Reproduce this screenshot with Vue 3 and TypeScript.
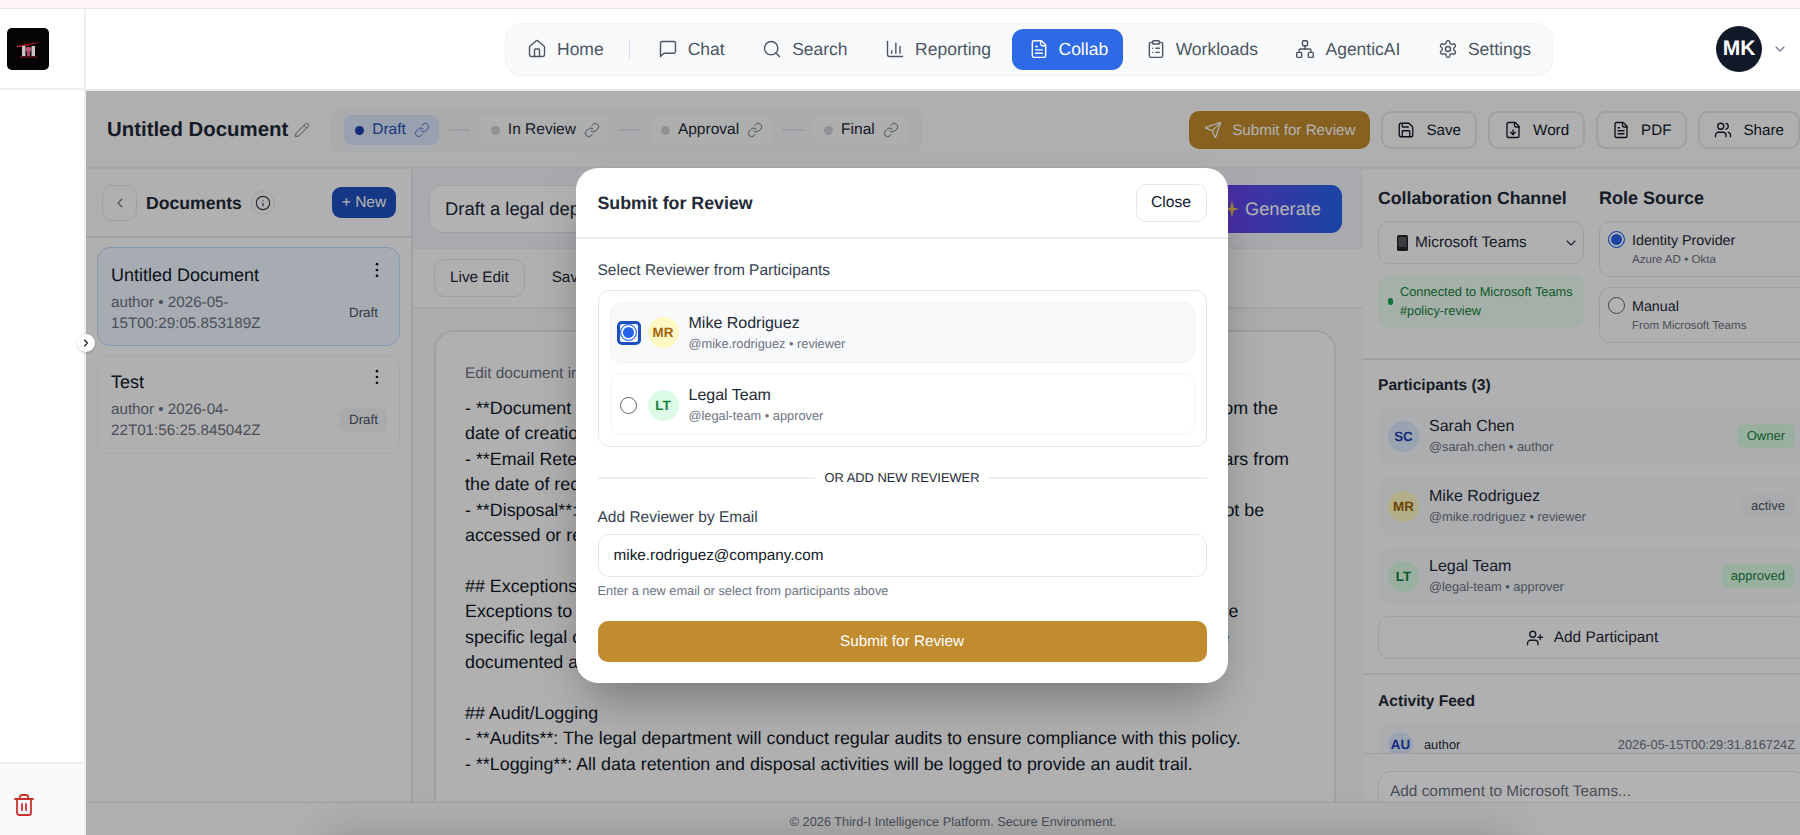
<script setup lang="ts">
import { h } from 'vue';

// lucide-style outlines, keyed by name
const icons: Record<string, string[]> = {
  home: ['M15 21v-8a1 1 0 0 0-1-1h-4a1 1 0 0 0-1 1v8', 'M3 10a2 2 0 0 1 .709-1.528l7-5.999a2 2 0 0 1 2.582 0l7 5.999A2 2 0 0 1 21 10v9a2 2 0 0 1-2 2H5a2 2 0 0 1-2-2z'],
  chat: ['M21 15a2 2 0 0 1-2 2H7l-4 4V5a2 2 0 0 1 2-2h14a2 2 0 0 1 2 2z'],
  search: ['M19 11a8 8 0 1 1-16 0 8 8 0 0 1 16 0', 'm21 21-4.3-4.3'],
  chart: ['M3 3v16a2 2 0 0 0 2 2h16', 'M18 17V9', 'M13 17V5', 'M8 17v-3'],
  file: ['M15 2H6a2 2 0 0 0-2 2v16a2 2 0 0 0 2 2h12a2 2 0 0 0 2-2V7Z', 'M14 2v4a2 2 0 0 0 2 2h4', 'M10 9H8', 'M16 13H8', 'M16 17H8'],
  clipboard: ['M9 2h6a1 1 0 0 1 1 1v2a1 1 0 0 1-1 1H9a1 1 0 0 1-1-1V3a1 1 0 0 1 1-1z', 'M16 4h2a2 2 0 0 1 2 2v14a2 2 0 0 1-2 2H6a2 2 0 0 1-2-2V6a2 2 0 0 1 2-2h2', 'M12 11h4', 'M12 16h4', 'M8 11h.01', 'M8 16h.01'],
  network: ['M17 16h4a1 1 0 0 1 1 1v4a1 1 0 0 1-1 1h-4a1 1 0 0 1-1-1v-4a1 1 0 0 1 1-1z', 'M3 16h4a1 1 0 0 1 1 1v4a1 1 0 0 1-1 1H3a1 1 0 0 1-1-1v-4a1 1 0 0 1 1-1z', 'M10 2h4a1 1 0 0 1 1 1v4a1 1 0 0 1-1 1h-4a1 1 0 0 1-1-1V3a1 1 0 0 1 1-1z', 'M5 16v-3a1 1 0 0 1 1-1h12a1 1 0 0 1 1 1v3', 'M12 12V8'],
  gear: ['M12.22 2h-.44a2 2 0 0 0-2 2v.18a2 2 0 0 1-1 1.73l-.43.25a2 2 0 0 1-2 0l-.15-.08a2 2 0 0 0-2.73.73l-.22.38a2 2 0 0 0 .73 2.73l.15.1a2 2 0 0 1 1 1.72v.51a2 2 0 0 1-1 1.74l-.15.09a2 2 0 0 0-.73 2.73l.22.38a2 2 0 0 0 2.73.73l.15-.08a2 2 0 0 1 2 0l.43.25a2 2 0 0 1 1 1.73V20a2 2 0 0 0 2 2h.44a2 2 0 0 0 2-2v-.18a2 2 0 0 1 1-1.73l.43-.25a2 2 0 0 1 2 0l.15.08a2 2 0 0 0 2.73-.73l.22-.39a2 2 0 0 0-.73-2.73l-.15-.08a2 2 0 0 1-1-1.74v-.5a2 2 0 0 1 1-1.74l.15-.09a2 2 0 0 0 .73-2.73l-.22-.38a2 2 0 0 0-2.73-.73l-.15.08a2 2 0 0 1-2 0l-.43-.25a2 2 0 0 1-1-1.73V4a2 2 0 0 0-2-2z', 'M15 12a3 3 0 1 1-6 0 3 3 0 0 1 6 0'],
  pencil: ['M21.174 6.812a1 1 0 0 0-3.986-3.987L3.842 16.174a2 2 0 0 0-.5.83l-1.321 4.352a.5.5 0 0 0 .623.622l4.353-1.32a2 2 0 0 0 .83-.497z', 'm15 5 4 4'],
  link: ['M10 13a5 5 0 0 0 7.54.54l3-3a5 5 0 0 0-7.07-7.07l-1.72 1.71', 'M14 11a5 5 0 0 0-7.54-.54l-3 3a5 5 0 0 0 7.07 7.07l1.71-1.71'],
  send: ['M14.536 21.686a.5.5 0 0 0 .937-.024l6.5-19a.496.496 0 0 0-.635-.635l-19 6.5a.5.5 0 0 0-.024.937l7.93 3.18a2 2 0 0 1 1.112 1.11z', 'm21.854 2.147-10.94 10.939'],
  save: ['M15.2 3a2 2 0 0 1 1.4.6l3.8 3.8a2 2 0 0 1 .6 1.4V19a2 2 0 0 1-2 2H5a2 2 0 0 1-2-2V5a2 2 0 0 1 2-2z', 'M17 21v-7a1 1 0 0 0-1-1H8a1 1 0 0 0-1 1v7', 'M7 3v4a1 1 0 0 0 1 1h7'],
  fileDown: ['M15 2H6a2 2 0 0 0-2 2v16a2 2 0 0 0 2 2h12a2 2 0 0 0 2-2V7Z', 'M14 2v4a2 2 0 0 0 2 2h4', 'M12 18v-6', 'm9 15 3 3 3-3'],
  users: ['M16 21v-2a4 4 0 0 0-4-4H6a4 4 0 0 0-4 4v2', 'M13 7a4 4 0 1 1-8 0 4 4 0 0 1 8 0', 'M22 21v-2a4 4 0 0 0-3-3.87', 'M16 3.13a4 4 0 0 1 0 7.75'],
  userPlus: ['M16 21v-2a4 4 0 0 0-4-4H6a4 4 0 0 0-4 4v2', 'M13 7a4 4 0 1 1-8 0 4 4 0 0 1 8 0', 'M19 8v6', 'M22 11h-6'],
  trash: ['M3 6h18', 'M19 6v14c0 1-1 2-2 2H7c-1 0-2-1-2-2V6', 'M8 6V4c0-1 1-2 2-2h4c1 0 2 1 2 2v2', 'M10 11v6', 'M14 11v6'],
  info: ['M22 12a10 10 0 1 1-20 0 10 10 0 0 1 20 0', 'M12 16v-4', 'M12 8h.01'],
  left: ['m15 18-6-6 6-6'],
  right: ['m9 18 6-6-6-6'],
  down: ['m6 9 6 6 6-6'],
  kebab: ['M12 5h.01', 'M12 12h.01', 'M12 19h.01'],
};

const Icon = (props: { name: string; size?: number; sw?: number }) =>
  h(
    'svg',
    {
      width: props.size ?? 20,
      height: props.size ?? 20,
      viewBox: '0 0 24 24',
      fill: 'none',
      stroke: 'currentColor',
      'stroke-width': props.sw ?? 2,
      'stroke-linecap': 'round',
      'stroke-linejoin': 'round',
      style: 'flex:none;display:block',
    },
    (icons[props.name] ?? []).map((d) => h('path', { d })),
  );
Icon.props = ['name', 'size', 'sw'];

const navItems = [
  { label: 'Home', icon: 'home', sep: true },
  { label: 'Chat', icon: 'chat' },
  { label: 'Search', icon: 'search' },
  { label: 'Reporting', icon: 'chart' },
  { label: 'Collab', icon: 'file', active: true },
  { label: 'Workloads', icon: 'clipboard' },
  { label: 'AgenticAI', icon: 'network' },
  { label: 'Settings', icon: 'gear' },
];

const stages = [
  { label: 'Draft', active: true },
  { label: 'In Review' },
  { label: 'Approval' },
  { label: 'Final' },
];

const actions = [
  { label: 'Save', icon: 'save' },
  { label: 'Word', icon: 'fileDown' },
  { label: 'PDF', icon: 'file' },
  { label: 'Share', icon: 'users' },
];

const documents = [
  { title: 'Untitled Document', meta: 'author • 2026-05-15T00:29:05.853189Z', selected: true },
  { title: 'Test', meta: 'author • 2026-04-22T01:56:25.845042Z' },
];

const docLines = [
  '- **Document Retention**: All documents must be retained for a strict minimum of seven years from the',
  'date of creation or last modification, whichever occurs later in the retention cycle.',
  '- **Email Retention**: All of our correspondence should be securely retained for at least three years from',
  'the date of receipt or sending, unless a longer period applies under this policy.',
  '- **Disposal**: Documents and emails past their fixed retention date must be deleted and must not be',
  'accessed or restored after disposal has been completed by the responsible team.',
  '',
  '## Exceptions',
  'Exceptions to this policy must be approved by the legal department in writing only where there are',
  'specific legal or regulatory requirements for longer data retention. All allowed exceptions must be',
  'documented and reviewed on an annual basis by the department.',
  '',
  '## Audit/Logging',
  '- **Audits**: The legal department will conduct regular audits to ensure compliance with this policy.',
  '- **Logging**: All data retention and disposal activities will be logged to provide an audit trail.',
];

const participants = [
  { initials: 'SC', tone: 'blue', name: 'Sarah Chen', sub: '@sarah.chen • author', badge: 'Owner', badgeTone: 'green' },
  { initials: 'MR', tone: 'yellow', name: 'Mike Rodriguez', sub: '@mike.rodriguez • reviewer', badge: 'active', badgeTone: 'gray' },
  { initials: 'LT', tone: 'green', name: 'Legal Team', sub: '@legal-team • approver', badge: 'approved', badgeTone: 'green' },
];

const reviewers = [
  { initials: 'MR', tone: 'yellow', name: 'Mike Rodriguez', sub: '@mike.rodriguez • reviewer', checked: true },
  { initials: 'LT', tone: 'green', name: 'Legal Team', sub: '@legal-team • approver', checked: false },
];
</script>

<template>
  <div class="app">
    <div class="strip"></div>
    <div class="shell">
      <aside class="rail">
        <div class="rail-top">
          <svg class="logo" width="42" height="42" viewBox="0 0 42 42">
            <rect width="42" height="42" rx="5" fill="#060405" />
            <path d="M9 18 L35 13.5 L17 18.5 L10 19 Z" fill="#c0262d" />
            <rect x="15" y="18" width="3.5" height="10" fill="#c9c5c6" />
            <rect x="24.5" y="18" width="3.5" height="10" fill="#c9c5c6" />
            <circle cx="21.5" cy="21.5" r="2.8" fill="#c0587a" />
            <rect x="20" y="22" width="3" height="6" fill="#b04a6a" />
            <rect x="13" y="28.5" width="17" height="1" fill="#8a2028" />
          </svg>
        </div>
        <div class="rail-fill"></div>
        <div class="rail-foot">
          <Icon class="trash" name="trash" :size="24" :sw="1.8" />
        </div>
      </aside>

      <div class="workspace">
        <header class="topbar">
          <nav class="nav">
            <template v-for="item in navItems" :key="item.label">
              <a class="nav-item" :class="{ active: item.active }">
                <Icon :name="item.icon" :size="20" :sw="1.7" />
                <span>{{ item.label }}</span>
              </a>
              <span v-if="item.sep" class="nav-sep"></span>
            </template>
          </nav>
          <div class="avatar-main">MK</div>
          <Icon class="avatar-caret" name="down" :size="16" :sw="1.6" />
        </header>

        <div class="content">
          <div class="doc-bar">
            <h1 class="doc-title">Untitled Document</h1>
            <Icon class="doc-pencil" name="pencil" :size="16" :sw="1.5" />
            <div class="stages">
              <template v-for="(s, i) in stages" :key="s.label">
                <span v-if="i > 0" class="stage-dash"></span>
                <div class="stage" :class="{ active: s.active }">
                  <span class="stage-dot"></span>
                  <span>{{ s.label }}</span>
                  <Icon class="stage-link" name="link" :size="16" :sw="1.5" />
                </div>
              </template>
            </div>
            <div class="actions">
              <button class="btn btn-gold">
                <Icon name="send" :size="18" :sw="1.6" />
                Submit for Review
              </button>
              <button v-for="a in actions" :key="a.label" class="btn">
                <Icon :name="a.icon" :size="18" :sw="1.8" />
                {{ a.label }}
              </button>
            </div>
          </div>

          <div class="panes">
            <section class="docs">
              <div class="docs-head">
                <button class="back"><Icon name="left" :size="16" :sw="1.6" /></button>
                <span class="docs-title">Documents</span>
                <span class="docs-info"><Icon name="info" :size="16" :sw="1.8" /></span>
                <button class="new">+ New</button>
              </div>
              <div class="docs-list">
                <article v-for="d in documents" :key="d.title" class="doc-card" :class="{ selected: d.selected }">
                  <div class="doc-card-top">
                    <span>{{ d.title }}</span>
                    <Icon class="kebab" name="kebab" :size="20" :sw="3.2" />
                  </div>
                  <div class="doc-card-bottom">
                    <span class="doc-meta">{{ d.meta }}</span>
                    <span class="doc-badge">Draft</span>
                  </div>
                </article>
              </div>
            </section>

            <section class="editor">
              <div class="prompt-row">
                <div class="prompt">Draft a legal department data retention policy</div>
                <button class="generate">
                  <svg width="14" height="18" viewBox="0 0 14 18"><path d="M7 0 L8.6 7.4 L14 9 L8.6 10.6 L7 18 L5.4 10.6 L0 9 L5.4 7.4 Z" fill="#e9bd54" /></svg>
                  Generate
                </button>
              </div>
              <div class="mode-row">
                <button class="mode">Live Edit</button>
                <button class="mode ghost">Save Version</button>
              </div>
              <div class="editor-body">
                <div class="doc-sheet">
                  <p class="sheet-hint">Edit document in the live editor below</p>
                  <p v-for="(line, i) in docLines" :key="i" class="sheet-line">{{ line }}</p>
                </div>
              </div>
            </section>

            <section class="collab">
              <div class="channel">
                <div class="channel-col">
                  <h3 class="h-lg narrow">Collaboration Channel</h3>
                  <div class="select">
                    <svg width="11" height="16" viewBox="0 0 11 16"><rect width="11" height="16" rx="1.5" fill="#23252a" /><rect x="1.5" y="2" width="8" height="10" fill="#55585e" /></svg>
                    <span>Microsoft Teams</span>
                    <Icon class="select-caret" name="down" :size="16" :sw="1.6" />
                  </div>
                  <div class="connected">
                    <span class="connected-dot"></span>
                    <span>Connected to Microsoft Teams<br />#policy-review</span>
                  </div>
                </div>
                <div class="role-col">
                  <h3 class="h-lg">Role Source</h3>
                  <label class="role-card">
                    <span class="radio on"></span>
                    <span class="role-text"><b>Identity Provider</b><small>Azure AD • Okta</small></span>
                  </label>
                  <label class="role-card">
                    <span class="radio"></span>
                    <span class="role-text"><b>Manual</b><small>From Microsoft Teams</small></span>
                  </label>
                </div>
              </div>

              <div class="people">
                <h4 class="h-sm">Participants (3)</h4>
                <div v-for="p in participants" :key="p.name" class="person">
                  <span class="initials" :class="p.tone">{{ p.initials }}</span>
                  <span class="person-text"><b>{{ p.name }}</b><small>{{ p.sub }}</small></span>
                  <span class="pill" :class="p.badgeTone">{{ p.badge }}</span>
                </div>
                <button class="add-person"><Icon name="userPlus" :size="18" :sw="1.8" /> Add Participant</button>
              </div>

              <div class="feed">
                <h4 class="h-sm">Activity Feed</h4>
                <div class="feed-item">
                  <span class="initials small blue">AU</span>
                  <span class="feed-who">author</span>
                  <span class="feed-time">2026-05-15T00:29:31.816724Z</span>
                </div>
              </div>

              <div class="comment">
                <div class="comment-input">Add comment to Microsoft Teams...</div>
              </div>
            </section>
          </div>

          <footer class="foot">© 2026 Third-I Intelligence Platform. Secure Environment.</footer>

          <div class="overlay">
            <div class="bottom-shade"></div>
            <div class="modal">
              <div class="modal-head">
                <h2>Submit for Review</h2>
                <button class="close">Close</button>
              </div>
              <div class="modal-body">
                <div class="field-label">Select Reviewer from Participants</div>
                <div class="reviewers">
                  <label v-for="r in reviewers" :key="r.name" class="reviewer" :class="{ checked: r.checked }">
                    <span class="radio-wrap" :class="{ focus: r.checked }"><span class="radio" :class="{ on: r.checked }"></span></span>
                    <span class="initials" :class="r.tone">{{ r.initials }}</span>
                    <span class="person-text"><b>{{ r.name }}</b><small>{{ r.sub }}</small></span>
                  </label>
                </div>
                <div class="or"><span>OR ADD NEW REVIEWER</span></div>
                <div class="field-label second">Add Reviewer by Email</div>
                <div class="email">mike.rodriguez@company.com</div>
                <div class="hint">Enter a new email or select from participants above</div>
                <button class="submit">Submit for Review</button>
              </div>
            </div>
          </div>
        </div>

        <button class="rail-toggle"><Icon name="right" :size="12" :sw="2.2" /></button>
      </div>
    </div>
  </div>
</template>

<style>
html,
body {
  margin: 0;
  background: #fff;
}
</style>

<style scoped>
.app {
  width: 1800px;
  height: 835px;
  overflow: hidden;
  display: flex;
  flex-direction: column;
  font-family: "Liberation Sans", Arial, sans-serif;
  text-rendering: geometricPrecision;
  color: #111827;
  background: #fff;
}
button {
  font-family: inherit;
  text-rendering: inherit;
  cursor: pointer;
}
h1, h2, h3, h4, p {
  margin: 0;
}
.strip {
  height: 8px;
  flex: none;
  background: #fdf5f6;
  border-bottom: 1px solid #e5e7eb;
}
.shell {
  flex: 1;
  min-height: 0;
  display: flex;
}

/* left rail */
.rail {
  width: 86px;
  flex: none;
  display: flex;
  flex-direction: column;
  box-sizing: border-box;
  border-right: 2px solid #eceef1;
}
.rail-top {
  height: 81px;
  box-sizing: border-box;
  border-bottom: 2px solid #eceef1;
  padding: 19px 0 0 7px;
}
.logo {
  display: block;
}
.rail-fill {
  flex: 1;
}
.rail-foot {
  height: 73px;
  box-sizing: border-box;
  border-top: 2px solid #eceef1;
  background: #f8f9fb;
  padding: 29px 0 0 12px;
}
.trash {
  color: #c8322b;
}

/* top bar */
.workspace {
  flex: 1;
  min-width: 0;
  display: flex;
  flex-direction: column;
  position: relative;
}
.topbar {
  height: 82px;
  flex: none;
  box-sizing: border-box;
  border-bottom: 2px solid #e5e7eb;
  display: flex;
  align-items: center;
  padding: 0 12px 0 419px;
}
.nav {
  height: 53px;
  width: 1048px;
  box-sizing: border-box;
  padding: 0 4px;
  display: flex;
  align-items: center;
  gap: 5.5px;
  background: #f9fafb;
  border: 1px solid #f1f2f5;
  border-radius: 16px;
}
.nav-item {
  height: 41px;
  box-sizing: border-box;
  padding: 0 15px 0 17px;
  display: flex;
  align-items: center;
  gap: 10px;
  font-size: 17.5px;
  color: #4b5563;
  border-radius: 11px;
}
.nav-item.active {
  background: #2f6ae6;
  color: #fff;
}
.nav-sep {
  width: 1px;
  height: 20px;
  margin: 0 5px;
  background: #d8dbe0;
}
.avatar-main {
  width: 46px;
  height: 46px;
  margin: 0 0 0 auto;
  border-radius: 50%;
  background: #111827;
  color: #fff;
  font-weight: 700;
  font-size: 21px;
  display: flex;
  align-items: center;
  justify-content: center;
}
.avatar-caret {
  color: #6b7280;
  margin: 0 0 0 10px;
}

/* content under the top bar */
.content {
  flex: 1;
  min-height: 0;
  display: flex;
  flex-direction: column;
  position: relative;
}
.doc-bar {
  height: 78px;
  flex: none;
  box-sizing: border-box;
  padding: 2px 0 0 21px;
  display: flex;
  align-items: center;
  border-bottom: 2px solid #eef0f3;
  background: #fbfbfc;
}
.doc-title {
  font-size: 20.4px;
  font-weight: 700;
  color: #1f2937;
  white-space: nowrap;
}
.doc-pencil {
  margin-left: 6px;
  color: #6b7280;
}
.stages {
  margin-left: 20px;
  height: 45px;
  box-sizing: border-box;
  padding: 0 14px;
  display: flex;
  align-items: center;
  gap: 10px;
  background: #f4f5f7;
  border-radius: 11px;
}
.stage {
  height: 30px;
  box-sizing: border-box;
  padding: 0 9px 0 11px;
  display: flex;
  align-items: center;
  gap: 8px;
  font-size: 15.5px;
  color: #1f2937;
  background: #f8f9fa;
  border-radius: 8px;
}
.stage.active {
  background: #dbe6fb;
  color: #2450b4;
}
.stage-dot {
  width: 9px;
  height: 9px;
  border-radius: 50%;
  background: #cfd2d6;
}
.stage.active .stage-dot {
  background: #1e40af;
}
.stage-link {
  color: #6b7280;
}
.stage.active .stage-link {
  color: #4f74c9;
}
.stage-dash {
  width: 21px;
  height: 2px;
  background: #dfe1e5;
}
.actions {
  margin-left: auto;
  display: flex;
  gap: 11px;
}
.btn {
  height: 38px;
  box-sizing: border-box;
  padding: 0 14px;
  display: flex;
  align-items: center;
  gap: 11px;
  font-size: 15.2px;
  color: #111827;
  background: #fbfbfc;
  border: 2px solid #e5e7eb;
  border-radius: 10px;
  white-space: nowrap;
}
.btn-gold {
  padding: 0 13px;
  gap: 10px;
  background: #c18b2f;
  border-color: #c18b2f;
  color: #fff;
}

.panes {
  flex: 1;
  min-height: 0;
  display: flex;
  overflow: hidden;
}

/* documents */
.docs {
  width: 327px;
  flex: none;
  box-sizing: border-box;
  border-right: 2px solid #e5e7eb;
  background: #fcfcfc;
}
.docs-head {
  height: 69px;
  box-sizing: border-box;
  padding: 0 15px 0 16px;
  border-bottom: 2px solid #e5e7eb;
  display: flex;
  align-items: center;
}
.back {
  width: 35px;
  height: 36px;
  padding: 0;
  background: none;
  border: 1.5px solid #e5e7eb;
  border-radius: 10px;
  color: #6b7280;
  display: flex;
  align-items: center;
  justify-content: center;
}
.docs-title {
  margin: 1px 0 0 9px;
  font-size: 17.6px;
  font-weight: 700;
  color: #1f2937;
}
.docs-info {
  width: 24px;
  height: 24px;
  margin-left: 9px;
  border: 1.5px solid #e5e7eb;
  box-sizing: border-box;
  border-radius: 50%;
  display: flex;
  align-items: center;
  justify-content: center;
  color: #374151;
}
.new {
  margin-left: auto;
  width: 64px;
  height: 31px;
  padding: 0;
  border: none;
  border-radius: 9px;
  background: #1e4fc0;
  color: #fff;
  font-size: 15.5px;
}
.docs-list {
  padding: 9px 11px;
  display: flex;
  flex-direction: column;
  gap: 9px;
}
.doc-card {
  height: 99px;
  box-sizing: border-box;
  padding: 14px 12px 0 13px;
  border: 1.5px solid #f0f1f3;
  border-radius: 13px;
}
.doc-card.selected {
  padding-top: 15px;
  background: #eff6ff;
  border-color: #bfdbfe;
}
.doc-card-top {
  display: flex;
  justify-content: space-between;
  font-size: 18px;
  line-height: 24px;
  color: #111827;
}
.kebab {
  margin: -3px 0 0 0;
  color: #111827;
}
.doc-card-bottom {
  margin-top: 5px;
  display: flex;
  align-items: center;
  justify-content: space-between;
}
.doc-meta {
  width: 175px;
  font-size: 15.2px;
  line-height: 21px;
  color: #6b7280;
}
.doc-badge {
  width: 47px;
  height: 24px;
  line-height: 24px;
  text-align: center;
  font-size: 13.4px;
  color: #4b5563;
  background: #f3f4f6;
  border-radius: 7px;
}
.doc-card.selected .doc-badge {
  background: #eff6ff;
}

/* editor */
.editor {
  width: 950px;
  flex: none;
  display: flex;
  flex-direction: column;
  min-height: 0;
}
.prompt-row {
  height: 80px;
  flex: none;
  box-sizing: border-box;
  padding: 16px 21px 0 16px;
  display: flex;
  gap: 12px;
  background: #f3f4f9;
  border-bottom: 2px solid #eceef1;
}
.prompt {
  flex: 1;
  height: 48px;
  box-sizing: border-box;
  padding: 0 15px;
  line-height: 46px;
  font-size: 18.4px;
  color: #1f2937;
  background: #fff;
  border: 1.5px solid #e5e7eb;
  border-radius: 13px;
}
.generate {
  width: 146px;
  height: 48px;
  padding: 0 0 0 8px;
  border: none;
  border-radius: 11px;
  background: linear-gradient(90deg, #7c3aed, #2563eb);
  color: #fff;
  font-size: 18.2px;
  display: flex;
  align-items: center;
  justify-content: center;
  gap: 6px;
}
.mode-row {
  height: 60px;
  flex: none;
  box-sizing: border-box;
  padding: 0 21px;
  display: flex;
  align-items: center;
  gap: 11px;
  background: #fcfcfc;
  border-bottom: 2px solid #eceef1;
}
.mode {
  height: 38px;
  padding: 0 15px;
  font-size: 15.3px;
  color: #1f2937;
  background: #fcfcfc;
  border: 1.5px solid #e5e7eb;
  border-radius: 11px;
}
.mode.ghost {
  border-color: transparent;
}
.editor-body {
  flex: 1;
  min-height: 0;
  padding: 21px 27px 0 21px;
  background: #f7f9f9;
  overflow: hidden;
}
.doc-sheet {
  height: 100%;
  box-sizing: content-box;
  padding: 32px 30px 0 29px;
  background: #fcfcfc;
  border: 2px solid #e5e7eb;
  border-bottom: none;
  border-radius: 20px 20px 0 0;
}
.sheet-hint {
  font-size: 15.4px;
  line-height: 20px;
  color: #6b7280;
  margin-bottom: 12px;
}
.sheet-line {
  font-size: 17.88px;
  line-height: 25.4px;
  min-height: 25.4px;
  white-space: nowrap;
  color: #111827;
}

/* right column */
.collab {
  width: 458px;
  flex: none;
  display: flex;
  flex-direction: column;
  min-height: 0;
  background: #fcfcfc;
  overflow: hidden;
}
.channel {
  height: 191px;
  flex: none;
  box-sizing: border-box;
  padding: 16px 15px 0;
  display: grid;
  grid-template-columns: 206px 222px;
  column-gap: 15px;
  border-bottom: 2px solid #e5e7eb;
}
.h-lg {
  font-size: 18px;
  font-weight: 700;
  line-height: 26px;
  color: #1f2937;
  margin-bottom: 10px;
  white-space: nowrap;
}
.h-lg.narrow {
  font-size: 17.7px;
}
.select {
  height: 43px;
  box-sizing: border-box;
  padding: 0 0 0 18px;
  display: flex;
  align-items: center;
  gap: 7px;
  font-size: 15.4px;
  color: #1f2937;
  background: #fcfcfc;
  border: 1.5px solid #e5e7eb;
  border-radius: 11px;
}
.select-caret {
  margin: 0 4px 0 auto;
  color: #1f2937;
}
.connected {
  margin-top: 11px;
  height: 52px;
  box-sizing: border-box;
  padding: 0 8px 0 10px;
  display: flex;
  align-items: center;
  gap: 7px;
  font-size: 12.8px;
  line-height: 19.4px;
  color: #15803d;
  background: #ecfdf3;
  border-radius: 11px;
  white-space: nowrap;
}
.connected-dot {
  width: 5px;
  height: 7px;
  flex: none;
  border-radius: 3px;
  background: #16a34a;
}
.role-card {
  height: 56px;
  box-sizing: border-box;
  margin-bottom: 10px;
  padding: 9px 8px;
  display: flex;
  gap: 7px;
  border: 1.5px solid #e5e7eb;
  border-radius: 11px;
}
.radio {
  width: 17px;
  height: 17px;
  flex: none;
  box-sizing: border-box;
  border: 1.5px solid #5f6368;
  border-radius: 50%;
  background: #fff;
  display: block;
}
.radio.on {
  border: 1.5px solid #2563eb;
  background: #2563eb;
  box-shadow: inset 0 0 0 2px #fff;
}
.role-text {
  display: flex;
  flex-direction: column;
  font-size: 14.3px;
  line-height: 20px;
  color: #1f2937;
}
.role-text b {
  font-weight: 400;
}
.role-text small {
  font-size: 11.6px;
  line-height: 18px;
  color: #6b7280;
}
.people {
  height: 315px;
  flex: none;
  box-sizing: border-box;
  padding: 15px 15px 0;
  border-bottom: 2px solid #e5e7eb;
}
.h-sm {
  font-size: 15.6px;
  font-weight: 700;
  line-height: 22px;
  color: #1f2937;
}
.person {
  margin-top: 10px;
  height: 58px;
  box-sizing: border-box;
  padding: 0 11px 0 10px;
  display: flex;
  align-items: center;
  gap: 10px;
  background: #f7f8fa;
  border-radius: 12px;
}
.person + .person {
  margin-top: 12px;
}
.initials {
  width: 31px;
  height: 31px;
  flex: none;
  border-radius: 50%;
  display: flex;
  align-items: center;
  justify-content: center;
  font-size: 13.4px;
  font-weight: 700;
}
.initials.blue {
  background: #dbeafe;
  color: #1e40af;
}
.initials.yellow {
  background: #fef9c3;
  color: #a16207;
}
.initials.green {
  background: #dcfce7;
  color: #15803d;
}
.initials.small {
  width: 25px;
  height: 25px;
}
.person-text {
  display: flex;
  flex-direction: column;
  font-size: 16px;
  line-height: 21px;
  color: #1f2937;
}
.person-text b {
  font-weight: 400;
}
.person-text small {
  font-size: 12.8px;
  line-height: 18px;
  margin-top: 1px;
  color: #6b7280;
}
.pill {
  margin-left: auto;
  height: 24px;
  padding: 0 10px;
  line-height: 24px;
  font-size: 13px;
  border-radius: 7px;
}
.pill.green {
  background: #dcfce7;
  color: #15803d;
}
.pill.gray {
  background: #f3f4f6;
  color: #4b5563;
}
.add-person {
  margin-top: 11px;
  width: 100%;
  height: 43px;
  background: #fcfcfc;
  border: 1.5px solid #e5e7eb;
  border-radius: 11px;
  font-size: 15.4px;
  color: #1f2937;
  display: flex;
  align-items: center;
  justify-content: center;
  gap: 10px;
}
.feed {
  height: 79px;
  flex: none;
  box-sizing: border-box;
  padding: 16px 15px 0;
  overflow: hidden;
  border-bottom: 1.5px solid #e5e7eb;
}
.feed-item {
  margin-top: 9px;
  height: 50px;
  box-sizing: border-box;
  padding: 10px 11px 0 10px;
  display: flex;
  align-items: flex-start;
  gap: 11px;
  background: #f7f8fa;
  border-radius: 12px;
  font-size: 12.8px;
  line-height: 25px;
}
.feed-who {
  color: #1f2937;
}
.feed-time {
  margin-left: auto;
  color: #6b7280;
}
.comment {
  flex: 1;
  min-height: 0;
  padding: 17px 15px 0;
  overflow: hidden;
}
.comment-input {
  height: 42px;
  box-sizing: border-box;
  padding: 11px 11px;
  font-size: 15.4px;
  color: #6b7280;
  background: #fff;
  border: 1.5px solid #e5e7eb;
  border-radius: 13px;
}
.foot {
  height: 33px;
  flex: none;
  box-sizing: border-box;
  padding: 3px 0 0 20px;
  border-top: 1.5px solid #e5e7eb;
  background: #fcfcfc;
  color: #6b7280;
  font-size: 12.75px;
  line-height: 32px;
  text-align: center;
}

/* review dialog */
.overlay {
  position: absolute;
  inset: 0;
  padding: 77px 83px 0 0;
  background: rgba(0, 0, 0, 0.3);
  display: flex;
  justify-content: center;
  align-items: flex-start;
  overflow: hidden;
}
.bottom-shade {
  position: absolute;
  left: 250px;
  right: 300px;
  bottom: -50px;
  height: 40px;
  box-shadow: 0 0 45px 12px rgba(0, 0, 0, 0.17);
}
.modal {
  position: relative;
  width: 652px;
  height: 515px;
  background: #fff;
  border-radius: 22px;
  box-shadow: 0 25px 50px -12px rgba(0, 0, 0, 0.35);
  overflow: hidden;
}
.modal-head {
  height: 71px;
  box-sizing: border-box;
  padding: 1px 21px 0 22px;
  display: flex;
  align-items: center;
  justify-content: space-between;
  border-bottom: 2px solid #eceef1;
}
.modal-head h2 {
  font-size: 17.8px;
  font-weight: 700;
  color: #1f2937;
}
.close {
  width: 71px;
  height: 38px;
  padding: 0;
  background: #fff;
  border: 1.5px solid #e5e7eb;
  border-radius: 10px;
  font-size: 15.6px;
  color: #111827;
}
.modal-body {
  padding: 21px 21px 0 22px;
}
.field-label {
  font-size: 15.5px;
  line-height: 22px;
  color: #374151;
}
.reviewers {
  margin-top: 8px;
  height: 157px;
  box-sizing: border-box;
  padding: 11px 11px;
  border: 1.5px solid #e5e7eb;
  border-radius: 11px;
  display: flex;
  flex-direction: column;
  gap: 10px;
}
.reviewer {
  height: 62px;
  box-sizing: border-box;
  padding: 0 10px 0 6px;
  display: flex;
  align-items: center;
  gap: 7px;
  border: 1.5px solid #f3f4f6;
  border-radius: 11px;
}
.reviewer.checked {
  background: #f8f9fb;
}
.reviewer:not(.checked) {
  padding-top: 2px;
}
.reviewer .person-text {
  margin-left: 3px;
}
.radio-wrap {
  width: 24px;
  height: 24px;
  flex: none;
  box-sizing: border-box;
  display: flex;
  align-items: center;
  justify-content: center;
  border-radius: 5px;
}
.radio-wrap.focus {
  border: 3px solid #1e4fc0;
}
.or {
  margin-top: 21px;
  display: flex;
  align-items: center;
  gap: 10px;
  font-size: 12.85px;
  line-height: 20px;
  color: #1f2937;
}
.or::before,
.or::after {
  content: '';
  flex: 1;
  height: 2px;
  background: #eceef1;
}
.field-label.second {
  margin-top: 19px;
}
.email {
  margin-top: 5px;
  height: 43px;
  box-sizing: border-box;
  padding: 0 15px;
  line-height: 42px;
  font-size: 15.3px;
  color: #111827;
  border: 1.5px solid #e5e7eb;
  border-radius: 11px;
}
.hint {
  margin-top: 5px;
  font-size: 12.8px;
  line-height: 18px;
  color: #6b7280;
}
.submit {
  margin-top: 21px;
  width: 100%;
  height: 41px;
  padding: 0;
  border: none;
  border-radius: 10px;
  background: #c18b2f;
  color: #fff;
  font-size: 15.3px;
}

.rail-toggle {
  position: absolute;
  left: -9px;
  top: 325px;
  width: 18px;
  height: 18px;
  padding: 0;
  border: none;
  border-radius: 50%;
  background: #fff;
  color: #111827;
  box-shadow: 0 1px 3px rgba(0, 0, 0, 0.2);
  display: flex;
  align-items: center;
  justify-content: center;
}
</style>
